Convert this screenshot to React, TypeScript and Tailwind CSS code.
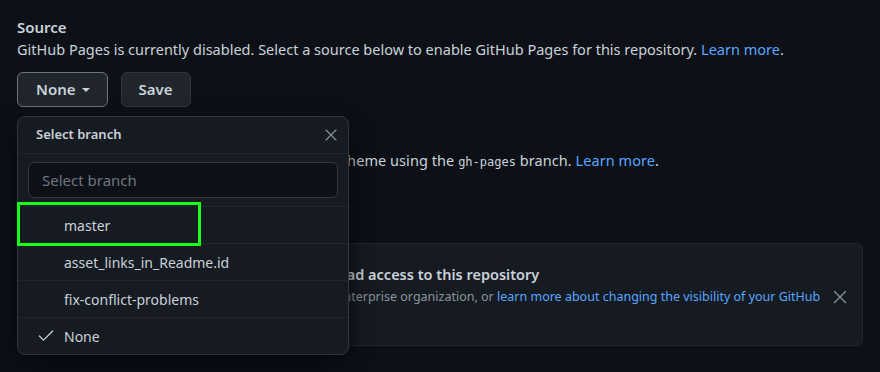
import { Check, X } from "lucide-react";

const branches = ["master", "asset_links_in_Readme.id", "fix-conflict-problems", "None"];

function BranchMenu() {
  return (
    <div className="absolute left-0 top-[44px] z-10 w-[332px] rounded-[8px] border border-[#30363d] bg-[#161b22] shadow-[0_8px_24px_rgba(1,4,9,0.75)]">
      <div className="flex h-[37px] items-center justify-between border-b border-[#21262d] pl-[18px] pr-[7px]">
        <span className="text-[13px] font-semibold text-[#c9d1d9]">Select branch</span>
        <X size={20} strokeWidth={1.4} className="text-[#8b949e]" />
      </div>
      <div className="border-b border-[#21262d] px-[10px] py-[8px]">
        <input
          placeholder="Select branch"
          className="h-[36px] w-full rounded-[6px] border border-[#30363d] bg-[#0d1117] px-[13px] text-[15px] text-[#c9d1d9] placeholder-[#6e7681] outline-none"
        />
      </div>
      {branches.map((b, i) => (
        <div
          key={b}
          className={`flex items-center text-[14px] text-[#c9d1d9] ${
            i < branches.length - 1 ? "h-[37px] border-b border-[#21262d]" : "h-[36px]"
          }`}
        >
          <span className="flex w-[46px] justify-end pr-[8px]">
            {b === "None" && <Check size={20} strokeWidth={1.5} className="text-[#c9d1d9]" />}
          </span>
          {b}
        </div>
      ))}
      {/* highlight around the first branch */}
      <div className="pointer-events-none absolute left-[-1px] top-[85px] h-[44px] w-[184px] border-[3px] border-[#1aff1a]" />
    </div>
  );
}

export default function App() {
  return (
    <div className="h-[372px] w-[880px] overflow-hidden bg-[#0d1117] px-[17px] pt-[16px] font-['Noto_Sans',sans-serif] text-[14.5px] text-[#c9d1d9]">
      <h3 className="text-[15px] font-semibold leading-[22px]">Source</h3>
      <p className="leading-[22px]">
        GitHub Pages is currently disabled. Select a source below to enable GitHub Pages for this repository.{" "}
        <a className="text-[#58a6ff]">Learn more</a>.
      </p>

      <div className="relative mt-[12px] flex gap-[13px]">
        <button className="flex h-[35px] items-center gap-[6px] rounded-[6px] border border-[#6e7681] bg-[#21262d] pl-[18px] pr-[17px] text-[15px] font-semibold">
          None
          <span className="h-0 w-0 border-x-[4px] border-t-[4px] border-x-transparent border-t-[#c9d1d9]" />
        </button>
        <button className="h-[35px] rounded-[6px] border border-[#30363d] bg-[#21262d] px-[17px] text-[15px] font-semibold">
          Save
        </button>
        <BranchMenu />
      </div>

      <div className="mt-[20px]">
        <h3 className="font-semibold leading-[22px]">Theme Chooser</h3>
        <p className="leading-[22px] tracking-[0.06px]">
          Select a theme to publish your site with a Jekyll theme using the{" "}
          <code className="font-['DejaVu_Sans_Mono',monospace] text-[12px] tracking-normal">gh-pages</code> branch.{" "}
          <a className="text-[#58a6ff]">Learn more</a>.
        </p>
      </div>

      <div className="mt-[70px] flex h-[103px] items-center rounded-[6px] border border-[#21262d] bg-[#161b22] pl-[20px]">
        <div className="flex w-[67px] shrink-0 justify-center self-start pt-[24px] text-[#8b949e]">
          <svg width="24" height="24" viewBox="0 0 24 24" fill="none" stroke="currentColor" strokeWidth="1.5">
            <rect x="5" y="10" width="14" height="10" rx="2" />
            <path d="M8 10V7a4 4 0 0 1 8 0v3" />
          </svg>
        </div>
        <div className="shrink-0 self-start pt-[19px]">
          <p className="font-semibold leading-[23px]">Publish privately to people with read access to this repository</p>
          <p className="whitespace-nowrap text-[12.5px] leading-[22px] text-[#8b949e]">
            Try risk-free for 30 days using a GitHub Enterprise organization, or{" "}
            <a className="text-[#58a6ff]">
              learn more about changing the visibility of your GitHub
              <br />
              Pages site
            </a>
            .
          </p>
        </div>
        <X size={22} strokeWidth={1.4} className="ml-[9px] mt-[5px] shrink-0 text-[#8b949e]" />
      </div>
    </div>
  );
}
